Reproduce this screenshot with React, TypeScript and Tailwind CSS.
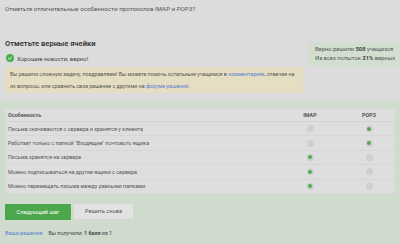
import React from "react";

const rows: { text: string; imap: boolean }[] = [
  { text: "Письма скачиваются с сервера и хранятся у клиента", imap: false },
  { text: "Работает только с папкой \"Входящие\" почтового ящика", imap: false },
  { text: "Письма хранятся на сервере", imap: true },
  { text: "Можно подписываться на другие ящики с сервера", imap: true },
  { text: "Можно перемещать письма между разными папками", imap: true },
];

function Radio({ on }: { on: boolean }) {
  return (
    <span className="flex h-[7px] w-[7px] items-center justify-center rounded-full bg-[#cfcfcf]">
      {on && <span className="h-[4px] w-[4px] rounded-full bg-[#4cae4c]" />}
    </span>
  );
}

export default function App() {
  return (
    <div
      className="h-[244px] w-[400px] overflow-hidden bg-[#dcdcdc] text-[#555]"
      style={{ fontFamily: "Roboto, 'Liberation Sans', sans-serif" }}
    >
      <div className="px-[5px] pt-[5px] text-[6.2px] leading-[9px] text-[#555]">
        Отметьте отличительные особенности протоколов IMAP и POP3?
      </div>

      <div className="mt-[25px] flex">
        <div className="w-[303px] pl-[5px]">
          <div className="text-[7.6px] font-semibold leading-[10px] text-[#333]">Отметьте верные ячейки</div>
          <div className="mt-[5px] flex h-[8px] items-center gap-[3px] pl-[1px]">
            <span className="flex h-[8px] w-[8px] items-center justify-center rounded-full bg-[#4cae4c]">
              <svg viewBox="0 0 10 10" className="h-[6px] w-[6px]">
                <path d="M2 5.2 L4.2 7.2 L8 3" fill="none" stroke="#fff" strokeWidth="1.6" />
              </svg>
            </span>
            <span className="text-[6px] text-[#444]">Хорошие новости, верно!</span>
          </div>
          <div className="mt-[5px] rounded-[3px] bg-[#e6dec2] py-[1px] pl-[5px] pr-[2px] text-[5.3px] leading-[12px] text-[#555]">
            Вы решили сложную задачу, поздравляем! Вы можете помочь остальным учащимся в{" "}
            <span className="text-[#5a7fd6]">комментариях</span>, отвечая на
            <br />
            их вопросы, или сравнить свое решение с другими на{" "}
            <span className="text-[#5a7fd6]">форуме решений</span>.
          </div>
        </div>
        <div className="ml-[5px] flex-1">
          <div className="mt-[3px] bg-[#d2dfd0] py-[3px] pl-[7px] text-[5.8px] leading-[9px] text-[#555]">
            <div>
              Верно решили <b className="text-[#444]">508</b> учащихся
            </div>
            <div>
              Из всех попыток <b className="text-[#444]">31%</b> верных
            </div>
          </div>
        </div>
      </div>

      <div className="mt-[6px] h-[200px] bg-gradient-to-b from-[#dcdcdc] to-[#cedbcd] to-[6px] px-[5px] pt-[10px]">
        <div className="bg-[#dedede] text-[5.4px] text-[#555]">
          <div className="flex h-[13px] items-center border-b border-[#d2d2d2] pl-[3px] font-bold text-[#555]">
            <span className="flex-1">Особенность</span>
            <span className="mr-[13px] w-[40px] text-center">IMAP</span>
            <span className="w-[52px] text-center">POP3</span>
          </div>
          {rows.map((r) => (
            <div key={r.text} className="flex h-[14.4px] items-center border-b border-[#d6d6d6] pl-[3px]">
              <span className="flex-1">{r.text}</span>
              <span className="mr-[13px] flex w-[40px] justify-center">
                <Radio on={r.imap} />
              </span>
              <span className="flex w-[52px] justify-center">
                <Radio on={!r.imap} />
              </span>
            </div>
          ))}
        </div>

        <div className="mt-[10px] flex gap-[3px]">
          <button className="h-[16px] w-[66px] rounded-[1px] bg-[#4ca64c] text-[5.6px] text-white">Следующий шаг</button>
          <button className="h-[15px] w-[59px] rounded-[1px] bg-[#e2e2e2] text-[5.6px] text-[#555]">Решить снова</button>
        </div>

        <div className="mt-[9px] flex gap-[6px] text-[5.4px]">
          <span className="text-[#5a7fd6]">Ваши решения</span>
          <span className="text-[#444]">
            Вы получили: <b>1 балл</b> из 1
          </span>
        </div>
      </div>
    </div>
  );
}
